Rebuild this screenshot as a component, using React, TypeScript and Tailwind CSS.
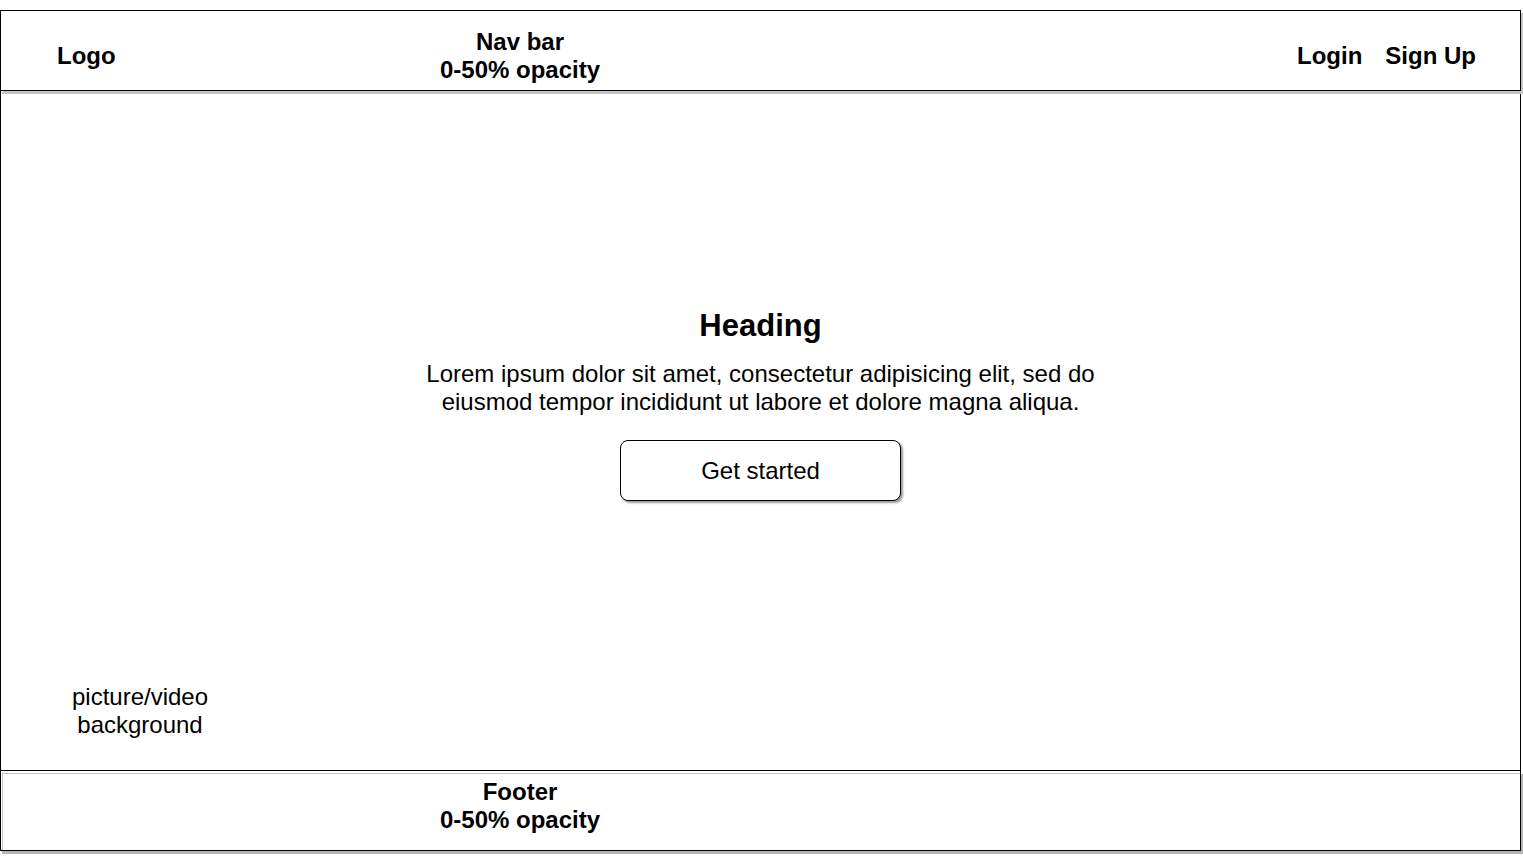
export default function App() {
  return (
    <div className="min-h-screen w-full bg-white pt-[10px] font-['Liberation_Sans',Arial,sans-serif] text-black">
      <div className="flex w-[1521px] flex-col">
        {/* Nav bar */}
        <header className="relative z-10 flex h-[81px] items-center border border-black bg-white pt-[10px] shadow-[2px_3px_0_#c4c4c4]">
          <div className="w-[399px] pl-[56px] text-[24px] font-bold leading-[28px]">Logo</div>
          <div className="w-[240px] text-center text-[24px] font-bold leading-[28px]">
            <div>Nav bar</div>
            <div>0-50% opacity</div>
          </div>
          <nav className="ml-auto flex items-center gap-[23px] pr-[44px] text-[24px] font-bold leading-[28px]">
            <span>Login</span>
            <span>Sign Up</span>
          </nav>
        </header>

        {/* Hero / background */}
        <main className="flex h-[680px] flex-col items-center border-x border-b border-black bg-white pt-[217px] pb-[31px]">
          <h1 className="text-[31px] font-bold leading-[36px]">Heading</h1>
          <p className="mt-[16px] text-center text-[24px] leading-[28px]">
            Lorem ipsum dolor sit amet, consectetur adipisicing elit, sed do
            <br />
            eiusmod tempor incididunt ut labore et dolore magna aliqua.
          </p>
          <button className="mt-[24px] h-[61px] w-[281px] rounded-[8px] border border-black bg-white text-[24px] shadow-[2px_2px_2px_#9a9a9a]">
            Get started
          </button>
          <div className="mt-auto w-[278px] self-start text-center text-[24px] leading-[28px]">
            picture/video
            <br />
            background
          </div>
        </main>

        {/* Footer */}
        <footer className="flex h-[80px] border-x border-b border-black bg-white shadow-[2px_3px_0_#b4b4b4]">
          <div className="ml-[1px] mt-[2px] flex-1 border-l border-t border-[#c4c4c4] pt-[4px]">
            <div className="ml-[397px] w-[240px] text-center text-[24px] font-bold leading-[28px]">
              <div>Footer</div>
              <div>0-50% opacity</div>
            </div>
          </div>
        </footer>
      </div>
    </div>
  );
}
